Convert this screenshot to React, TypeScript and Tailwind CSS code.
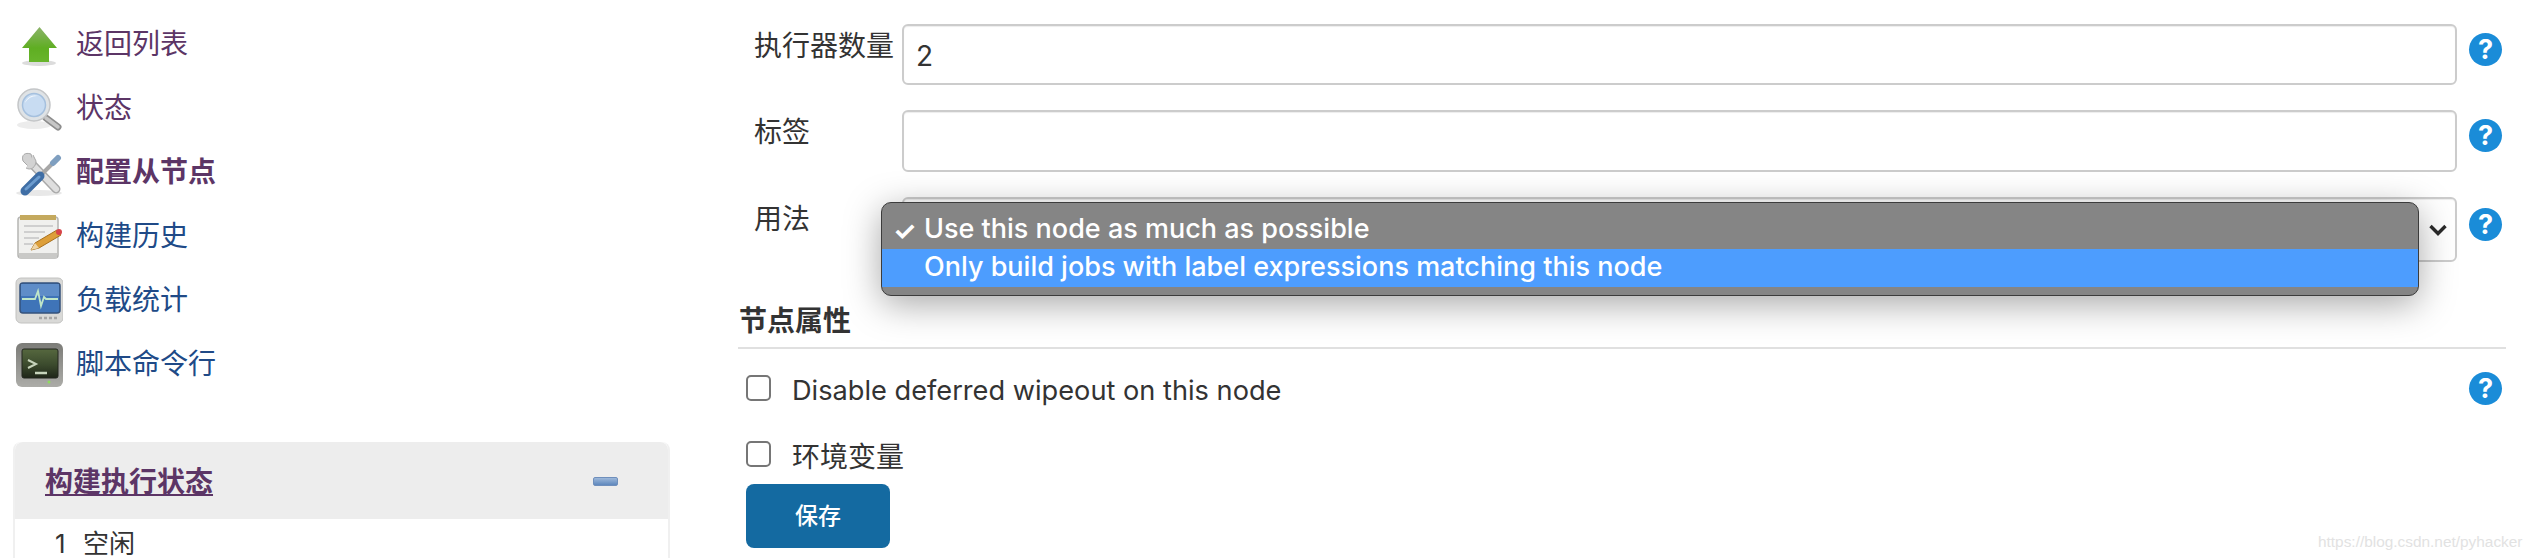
import type { ReactNode } from "react"

function ArrowIcon() {
  return (
    <svg viewBox="0 0 48 48" className="w-[48px] h-[48px] blur-[0.6px]">
      <defs>
        <linearGradient id="arrowFill" x1="0" y1="0" x2="0" y2="1">
          <stop offset="0" stopColor="#8cb36a" />
          <stop offset="0.6" stopColor="#5fae22" />
          <stop offset="1" stopColor="#68b52c" />
        </linearGradient>
      </defs>
      <ellipse cx="24" cy="43" rx="17" ry="3" fill="#dcdcdc" />
      <path d="M24.5 7 L42 28 L34 28 L34 42 L14 42 L14 28 L7 28 Z" fill="url(#arrowFill)" />
    </svg>
  )
}

function SearchIcon() {
  return (
    <svg viewBox="0 0 48 48" className="w-[48px] h-[48px] blur-[0.6px]">
      <ellipse cx="19" cy="41" rx="17" ry="4" fill="#ececec" />
      <path d="M31 34 L43 43" stroke="#8d8d8d" strokeWidth="7" strokeLinecap="round" />
      <path d="M31 34 L43 43" stroke="#c6c6c6" strokeWidth="3.5" strokeLinecap="round" />
      <circle cx="19" cy="21" r="16" fill="#dfe3e6" stroke="#c4c6c8" strokeWidth="1.5" />
      <circle cx="19" cy="21" r="11.5" fill="#c8dcf2" stroke="#a5c0de" strokeWidth="1.5" />
      <path d="M10 19 A10 10 0 0 1 23 12 A14 14 0 0 0 10 19 Z" fill="#f3f8fd" />
    </svg>
  )
}

function ToolsIcon() {
  return (
    <svg viewBox="0 0 48 48" className="w-[48px] h-[48px] blur-[0.5px]">
      <ellipse cx="24" cy="45" rx="23" ry="3" fill="#e8e8e8" />
      <path d="M17 16 L41 41" stroke="#a9a9a9" strokeWidth="9" strokeLinecap="round" />
      <path d="M17 16 L41 41" stroke="#dedede" strokeWidth="6" strokeLinecap="round" />
      <path d="M8 13 L13 18 L18 14 L16 6 C10 4 6 7 8 13 Z" fill="#d2d2d2" stroke="#a9a9a9" strokeWidth="1" />
      <path d="M11 20 C16 23 21 19 21 13 L18 7" fill="#d2d2d2" stroke="#a9a9a9" strokeWidth="1" />
      <path d="M25 28 L40 13" stroke="#a7a7a7" strokeWidth="4" />
      <path d="M38 15 L43 10" stroke="#7f9fc0" strokeWidth="6" strokeLinecap="round" />
      <path d="M10 43 L25 28" stroke="#3f6ea5" strokeWidth="9" strokeLinecap="round" />
      <path d="M11 41 L24 29" stroke="#6c9ccf" strokeWidth="3" strokeLinecap="round" />
    </svg>
  )
}

function NotepadIcon() {
  return (
    <svg viewBox="0 0 48 48" className="w-[48px] h-[48px] blur-[0.5px]">
      <rect x="3" y="5" width="40" height="41" rx="3" fill="#f0f0ee" stroke="#b5b5b3" strokeWidth="1.5" />
      <rect x="5" y="3" width="36" height="5" fill="#c4a95e" />
      <rect x="4" y="41" width="38" height="5" fill="#c9c9c7" />
      <path d="M9 14 H38 M9 20 H30 M9 26 H24 M9 32 H18" stroke="#cfcfcf" strokeWidth="2" />
      <path d="M16 38 L20 31 L42 18 L46 23 L24 36 Z" fill="#dd9f3a" stroke="#a8701e" strokeWidth="1" />
      <path d="M16 38 L20 31 L24 36 Z" fill="#efd5a6" />
      <circle cx="44" cy="20" r="3" fill="#d8444a" />
    </svg>
  )
}

function MonitorIcon() {
  return (
    <svg viewBox="0 0 48 48" className="w-[48px] h-[48px] blur-[0.5px]">
      <rect x="1" y="2" width="47" height="45" rx="5" fill="#d9d9d7" stroke="#c2c2c0" />
      <rect x="5" y="7" width="40" height="30" rx="3" fill="#3f74b8" stroke="#35527c" strokeWidth="1.5" />
      <rect x="6" y="8" width="38" height="12" fill="#6d98cf" opacity="0.7" />
      <path d="M7 23 H20 L23 15 L26 30 L29 21 L31 23 H43" fill="none" stroke="#bfe6c8" strokeWidth="1.8" />
      <path d="M24 42 H43" stroke="#a6a6a6" strokeWidth="2.5" strokeDasharray="3 2" />
    </svg>
  )
}

function TerminalIcon() {
  return (
    <svg viewBox="0 0 48 48" className="w-[48px] h-[48px] blur-[0.5px]">
      <defs>
        <linearGradient id="termBody" x1="0" y1="0" x2="0" y2="1">
          <stop offset="0" stopColor="#7c7c78" />
          <stop offset="1" stopColor="#acaca8" />
        </linearGradient>
        <linearGradient id="termScreen" x1="0" y1="0" x2="0" y2="1">
          <stop offset="0" stopColor="#56683f" />
          <stop offset="0.55" stopColor="#3b4a2d" />
          <stop offset="1" stopColor="#1f2619" />
        </linearGradient>
      </defs>
      <rect x="1" y="3" width="47" height="44" rx="6" fill="url(#termBody)" />
      <rect x="7" y="9" width="36" height="29" rx="2" fill="url(#termScreen)" stroke="#22261f" />
      <path d="M13 20 L21 24 L13 28" fill="none" stroke="#c7d4bc" strokeWidth="2" />
      <path d="M20 33 H32" stroke="#c7d4bc" strokeWidth="2.5" />
      <circle cx="34" cy="42" r="1.5" fill="#8ddc5d" />
    </svg>
  )
}

function HelpIcon() {
  return (
    <span className="flex w-[33px] h-[33px] shrink-0 items-center justify-center rounded-full bg-[#1a8cd8] text-white text-[27px] font-bold leading-none">
      ?
    </span>
  )
}

function NavItem({ icon, label, color, bold }: { icon: ReactNode; label: string; color: string; bold?: boolean }) {
  return (
    <a className={`flex h-16 items-center pl-[15px] ${color} ${bold ? "font-bold" : ""}`}>
      <span className="w-[61px] shrink-0">{icon}</span>
      <span>{label}</span>
    </a>
  )
}

function Sidebar() {
  const purple = "text-[#5c3566]"
  const blue = "text-[#204a87]"
  return (
    <aside className="w-[738px] shrink-0 pt-[12px]">
      <NavItem icon={<ArrowIcon />} label="返回列表" color={purple} />
      <NavItem icon={<SearchIcon />} label="状态" color={purple} />
      <NavItem icon={<ToolsIcon />} label="配置从节点" color={purple} bold />
      <NavItem icon={<NotepadIcon />} label="构建历史" color={blue} />
      <NavItem icon={<MonitorIcon />} label="负载统计" color={blue} />
      <NavItem icon={<TerminalIcon />} label="脚本命令行" color={blue} />
      <div className="mt-[46px] ml-[13px] w-[657px] rounded-t-lg border-x-2 border-[#f0f0f0]">
        <div className="flex h-[77px] items-center justify-between rounded-t-lg bg-[#ededed] pl-[30px] pr-[50px] pt-[2px]">
          <a className="font-bold text-[#5c3566] underline">构建执行状态</a>
          <span className="block h-[9px] w-[25px] rounded-[2px] border border-[#6f8fbc] bg-gradient-to-b from-[#9db8da] to-[#5f88bd]" />
        </div>
        <div className="flex h-[46px] items-center pl-[40px] pt-[2px] text-[#333] text-[26px]">
          <span className="w-[28px]">1</span>
          <span>空闲</span>
        </div>
      </div>
    </aside>
  )
}

function FormRow({ label, children, helpTop }: { label: string; children: ReactNode; helpTop: string }) {
  return (
    <div className="flex items-start">
      <label className="mt-[2px] w-[164px] shrink-0 pl-[16px] leading-[40px] whitespace-nowrap">{label}</label>
      {children}
      <div className={`ml-[12px] ${helpTop}`}>
        <HelpIcon />
      </div>
    </div>
  )
}

const inputClass =
  "block w-[1555px] rounded-md border-2 border-[#ccc] bg-white px-[12px] text-[28px] text-[#333] shadow-[inset_0_1px_1px_rgba(0,0,0,0.075)] outline-none"

function UsageMenu() {
  return (
    <div className="absolute left-[-23px] top-[3px] z-10 w-[1538px] h-[94px] rounded-[10px] border border-[#3c3c3c] bg-[#858585] pt-[8px] text-[27px] font-medium text-white shadow-[0_8px_36px_rgba(0,0,0,0.35)] overflow-hidden">
      <div className="flex h-[38px] items-center">
        <span className="w-[42px] pl-[11px] text-[26px] font-bold">✓</span>
        <span className="-mt-[2px]">Use this node as much as possible</span>
      </div>
      <div className="flex h-[38px] items-center bg-[#4d9dfe] pl-[42px]">
        <span className="-mt-[2px]">Only build jobs with label expressions matching this node</span>
      </div>
    </div>
  )
}

function ConfigForm() {
  return (
    <main className="w-[1768px] pt-[24px] text-[#333]">
      <div className="flex flex-col gap-[25px]">
        <FormRow label="执行器数量" helpTop="mt-[9px]">
          <input readOnly value="2" className={`${inputClass} h-[61px] pt-[2px]`} />
        </FormRow>
        <FormRow label="标签" helpTop="mt-[9px]">
          <input readOnly value="" className={`${inputClass} h-[62px]`} />
        </FormRow>
        <FormRow label="用法" helpTop="mt-[11px]">
          <div className={`${inputClass} relative h-[65px] flex items-center justify-end`}>
            <UsageMenu />
            <svg viewBox="0 0 18 12" className="w-[18px] h-[12px] mr-[-4px]" fill="none" stroke="#2b2b2b" strokeWidth="3.4">
              <path d="M1.5 2 L9 9.5 L16.5 2" />
            </svg>
          </div>
        </FormRow>
      </div>

      <h3 className="mt-[39px] border-b-2 border-[#e0e0e0] pb-[6px] font-bold leading-[40px] pl-px">节点属性</h3>

      <div className="mt-[26px] flex h-[66px] items-start pl-[8px]">
        <span className="h-[26px] w-[25px] shrink-0 rounded-[5px] border-2 border-[#767676] bg-white" />
        <span className="ml-[21px] text-[27.2px] leading-[32px]">Disable deferred wipeout on this node</span>
        <div className="ml-auto mr-[4px] mt-[-3px]">
          <HelpIcon />
        </div>
      </div>
      <div className="flex h-[43px] items-start pl-[8px]">
        <span className="h-[26px] w-[25px] shrink-0 rounded-[5px] border-2 border-[#767676] bg-white" />
        <span className="ml-[21px] leading-[32px]">环境变量</span>
      </div>
      <button className="ml-[8px] h-[64px] w-[144px] rounded-lg bg-[#146aa1] text-[23px] font-medium text-white">保存</button>
    </main>
  )
}

export default function App() {
  return (
    <div className="relative flex h-[558px] w-[2538px] overflow-hidden bg-white font-['Inter','Noto_Sans_CJK_SC',sans-serif] text-[28px]">
      <Sidebar />
      <ConfigForm />
      <span className="absolute left-[2318px] top-[530px] font-['Liberation_Sans',sans-serif] text-[15.4px] text-[#e2e2e2]">
        https://blog.csdn.net/pyhacker
      </span>
    </div>
  )
}
